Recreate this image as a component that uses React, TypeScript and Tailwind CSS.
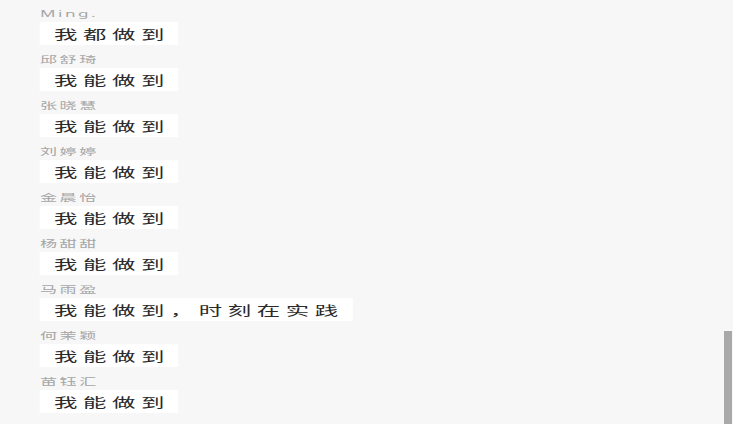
const messages = [
  { name: 'Ming.', text: '我都做到' },
  { name: '邱舒琦', text: '我能做到' },
  { name: '张晓慧', text: '我能做到' },
  { name: '刘婷婷', text: '我能做到' },
  { name: '金晨怡', text: '我能做到' },
  { name: '杨甜甜', text: '我能做到' },
  { name: '马雨盈', text: '我能做到，时刻在实践' },
  { name: '何茉颖', text: '我能做到' },
  { name: '苗钰汇', text: '我能做到' },
];

export default function App() {
  return (
    <div className="relative w-[733px] h-[424px] overflow-hidden bg-[#f7f7f7] font-['Noto_Sans','Noto_Sans_CJK_SC',sans-serif]">
      {/* list, stretched horizontally like the capture */}
      <div className="origin-top-left scale-x-[1.8] pl-[22.2px] flex flex-col">
        {messages.map((m, i) => (
          <div key={i} className="flex flex-col items-start h-[46px]">
            <div className="h-[22px] pt-[5px] leading-[17px] text-[9.5px] tracking-[1.4px] text-[#a6a6a6]">
              {m.name}
            </div>
            <div className="h-[23px] bg-white pl-[7.8px] pr-[5px] pt-[2px] leading-[21px] text-[13px] tracking-[3.1px] text-[#2a2a2a] whitespace-nowrap">
              {m.text}
            </div>
          </div>
        ))}
      </div>

      {/* scrollbar thumb */}
      <div className="absolute right-[1px] top-[331px] bottom-0 w-[8px] bg-[#a9a9a9]" />
    </div>
  );
}
